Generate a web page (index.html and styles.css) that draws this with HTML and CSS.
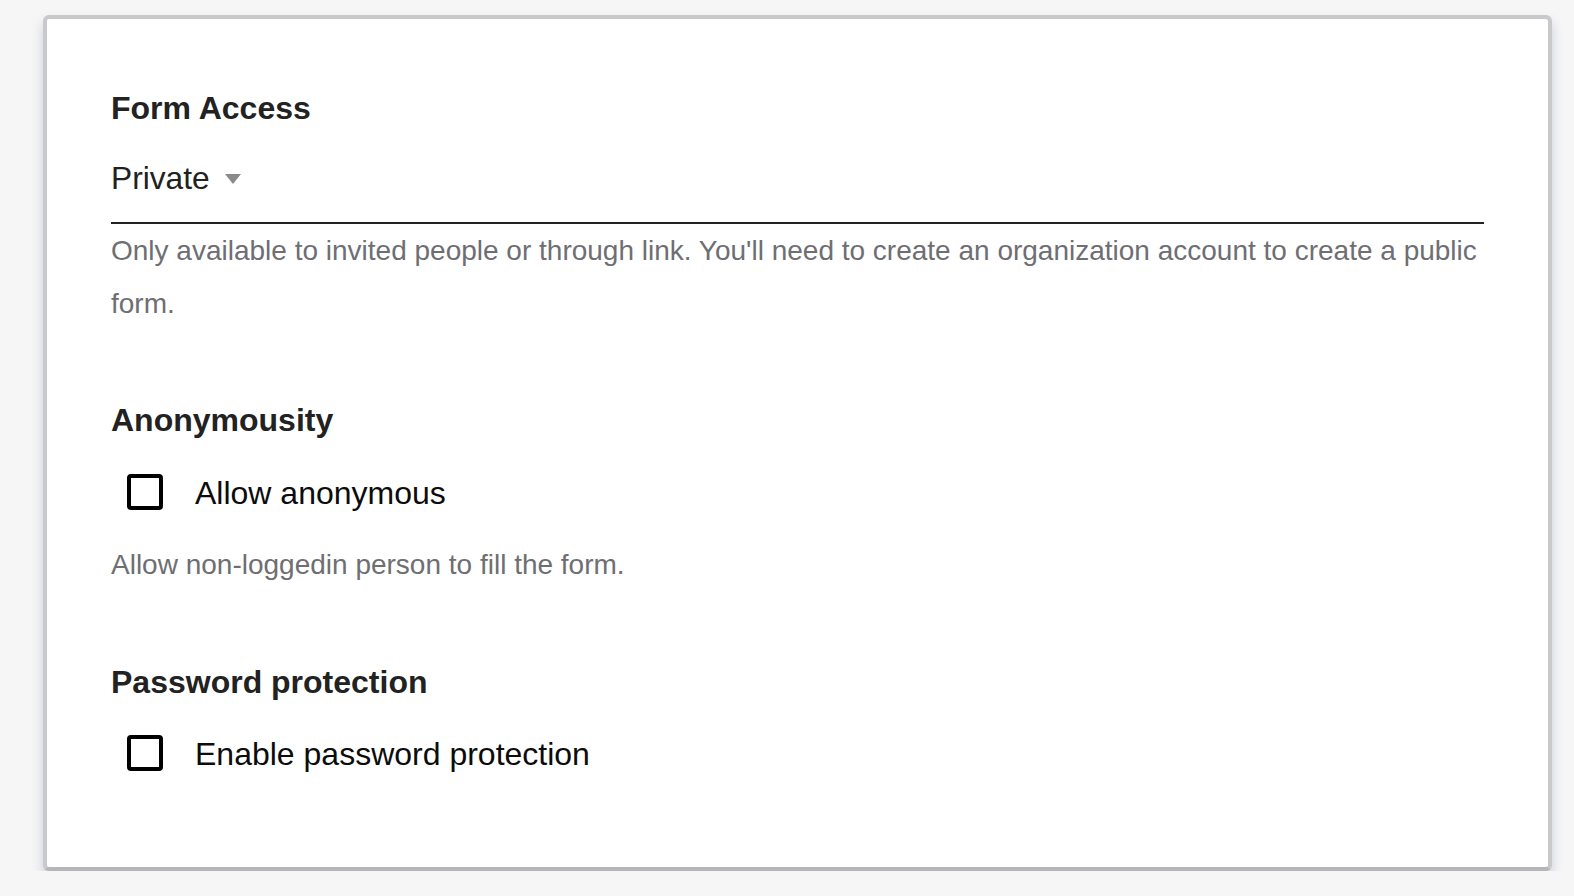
FILE: index.html
```html
<!DOCTYPE html>
<html lang="en">
<head>
<meta charset="utf-8">
<title>Form settings</title>
<link rel="stylesheet" href="styles.css">
</head>
<body>
<div class="card">
  <section class="section first">
    <h2 class="section-title">Form Access</h2>
    <div class="select">
      <span class="select-value">Private</span>
      <span class="select-arrow"></span>
    </div>
    <p class="help">Only available to invited people or through link. You'll need to create an organization account to create a public form.</p>
  </section>

  <section class="section">
    <h2 class="section-title">Anonymousity</h2>
    <label class="check-row">
      <span class="checkbox"></span>
      <span class="check-label">Allow anonymous</span>
    </label>
    <p class="help help-after-check">Allow non-loggedin person to fill the form.</p>
  </section>

  <section class="section last">
    <h2 class="section-title">Password protection</h2>
    <label class="check-row">
      <span class="checkbox"></span>
      <span class="check-label">Enable password protection</span>
    </label>
  </section>
</div>
</body>
</html>
```

FILE: styles.css
```css
html, body {
  margin: 0;
  padding: 0;
}

body {
  background: #f6f6f6;
  font-family: "Liberation Sans", Arial, sans-serif;
  color: #212121;
}

.card {
  box-sizing: border-box;
  margin: 15px 22px 0 43px;
  height: 856px;
  background: #ffffff;
  border: 4px solid #c9c9cc;
  border-bottom-color: #b5b5ba;
  border-radius: 6px;
  box-shadow: 0 7px 12px rgba(70, 80, 140, 0.24);
  padding: 0 64px;
}

.section {
  margin-top: 72px;
}

.section.first {
  margin-top: 71px;
}

.section.last {
  margin-top: 73px;
}

.section-title {
  margin: 0;
  font-size: 32px;
  line-height: 36px;
  font-weight: 700;
  color: #222222;
}

.select {
  display: flex;
  align-items: center;
  margin-top: 34px;
  padding-bottom: 26px;
  border-bottom: 2px solid #222222;
}

.select-value {
  font-size: 31.7px;
  line-height: 36px;
  color: #212121;
}

.select-arrow {
  width: 0;
  height: 0;
  margin-left: 15px;
  margin-top: 2px;
  border-left: 8.5px solid transparent;
  border-right: 8.5px solid transparent;
  border-top: 10px solid #8a8a8a;
}

.help {
  margin: 0;
  font-size: 28px;
  line-height: 53px;
  color: #6e6e73;
}

.help-after-check {
  margin-top: 11px;
}

.check-row {
  display: flex;
  align-items: center;
  height: 70px;
  margin-top: 19px;
}

.section.last .check-row {
  margin-top: 18px;
}

.checkbox {
  box-sizing: border-box;
  width: 36px;
  height: 36px;
  margin-left: 16px;
  border: 4px solid #000000;
  border-radius: 4px;
  flex: none;
}

.check-label {
  margin-left: 32px;
  font-size: 32px;
  line-height: 32px;
  color: #0c0c0c;
  padding-top: 2px;
}
```
